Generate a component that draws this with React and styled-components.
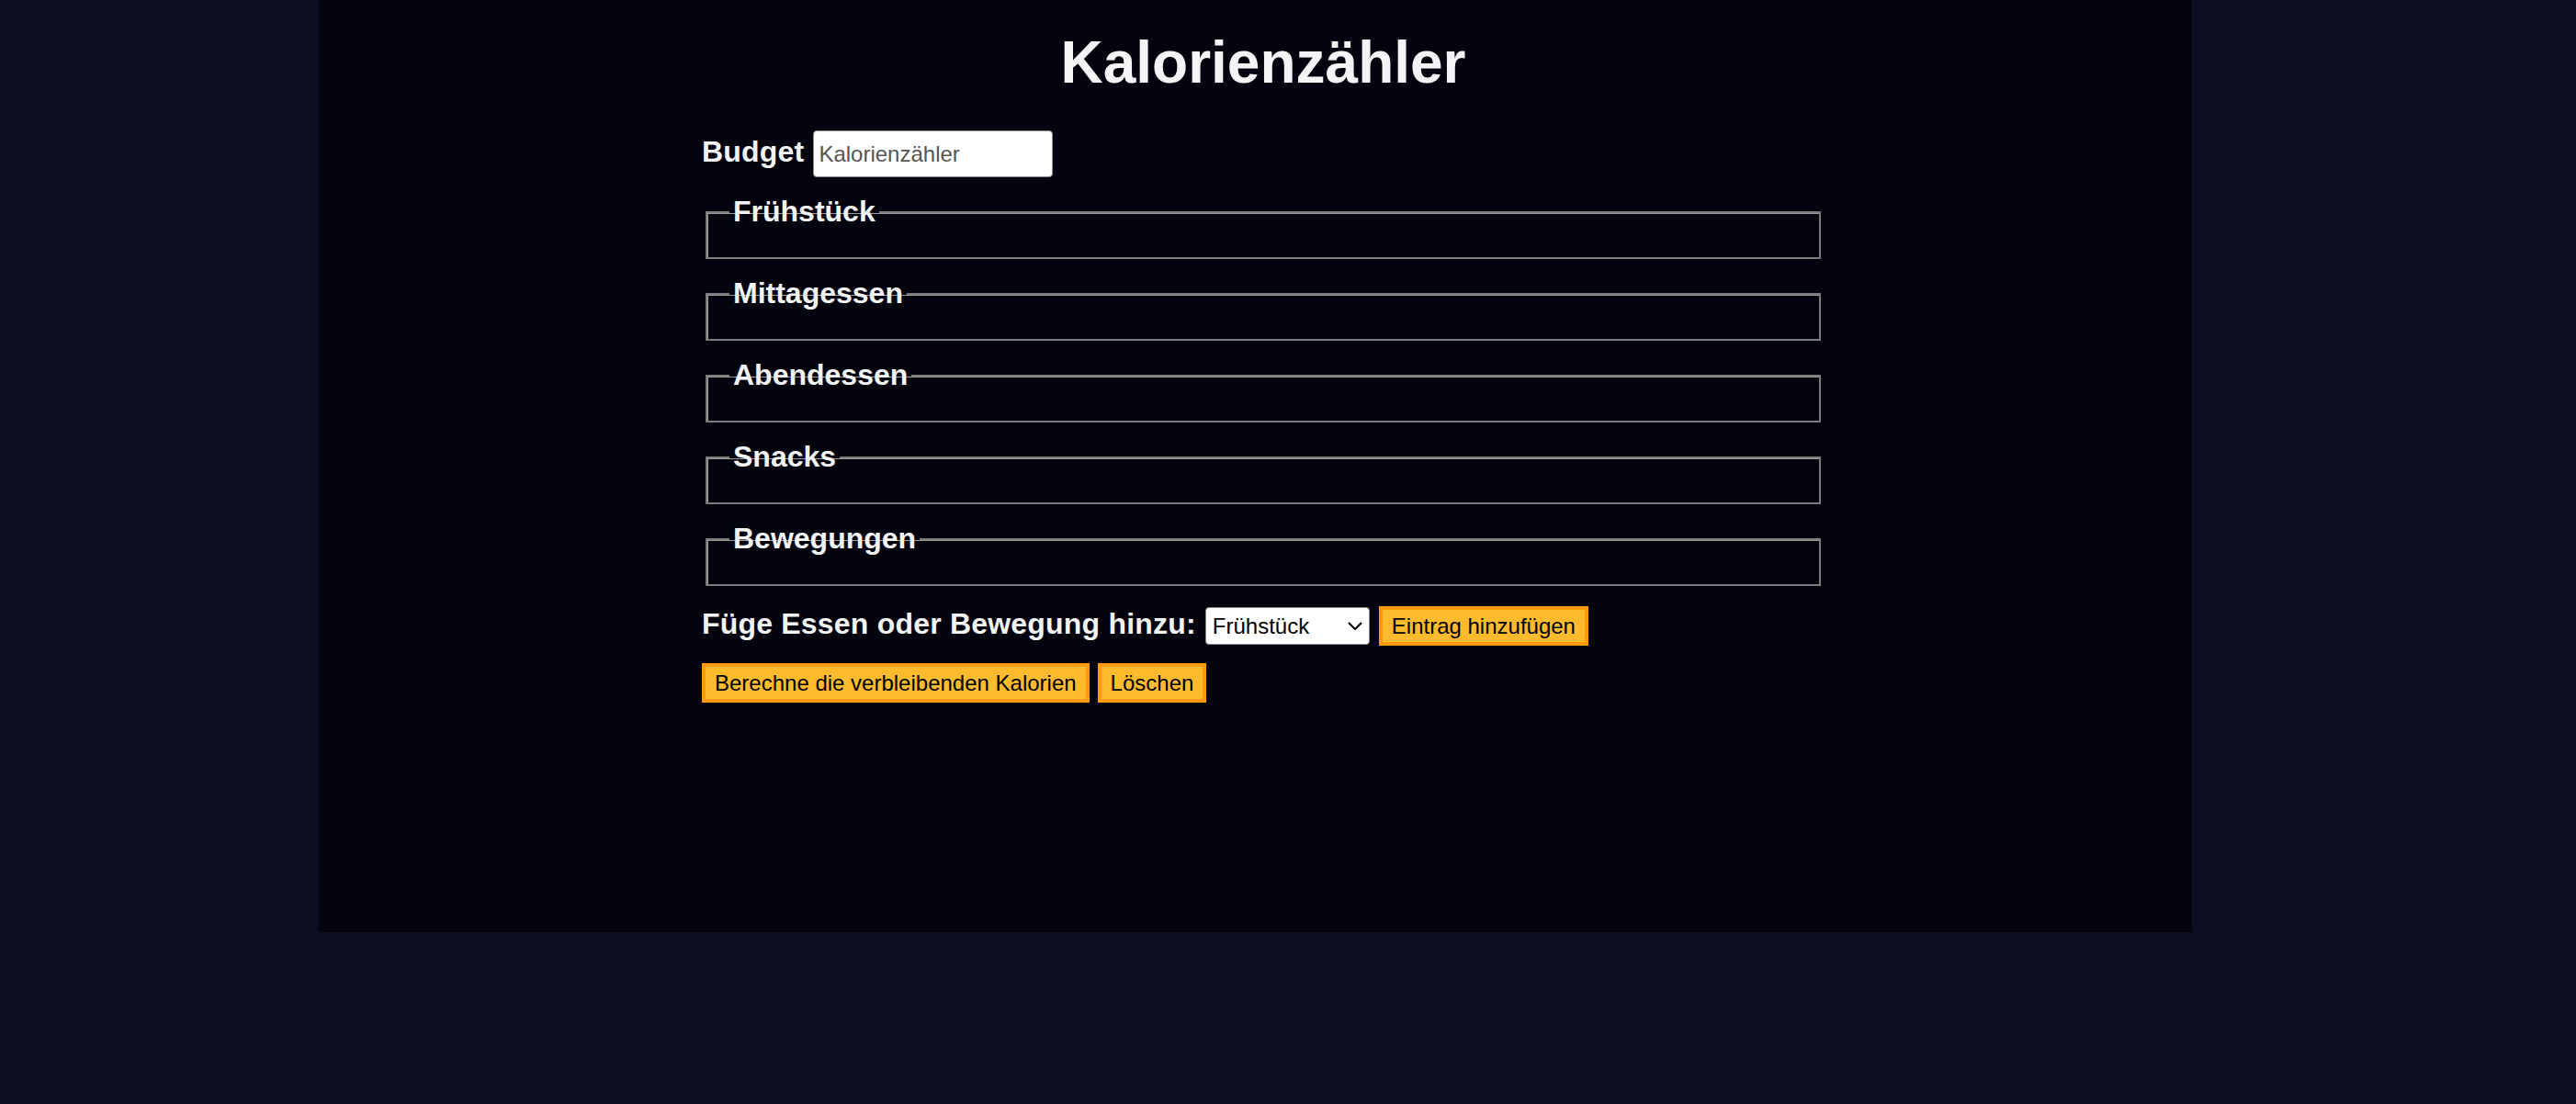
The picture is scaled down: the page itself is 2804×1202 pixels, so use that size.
import React from "react";
import styled, { createGlobalStyle } from "styled-components";

const GlobalStyle = createGlobalStyle`
  body {
    margin: 0;
    background-color: #0c0d21;
    font-family: "Liberation Sans", Arial, sans-serif;
  }
`;

const Page = styled.main`
  margin-left: 347px;
  width: 2039px;
  height: 1015px;
  background-color: #04040f;
  overflow: hidden;
`;

const Inner = styled.div`
  width: 1222px;
  margin-left: 417px;
`;

const Title = styled.h1`
  margin: 31px 0 0;
  font-size: 64px;
  line-height: 74px;
  font-weight: 700;
  color: #f3f4f6;
  text-align: center;
`;

const Row = styled.div`
  display: flex;
  align-items: baseline;
  gap: ${(p) => p.gap || 10}px;
  margin-top: ${(p) => p.top || 0}px;
`;

const Label = styled.label`
  font-size: 32px;
  line-height: 37px;
  font-weight: 700;
  color: #f3f4f6;
  letter-spacing: 0.2px;
`;

const BudgetInput = styled.input`
  box-sizing: border-box;
  width: 261px;
  height: 51px;
  padding: 0 5px;
  border: 1px solid #8a8a8a;
  border-radius: 4px;
  background: #fff;
  font-family: "Liberation Sans", Arial, sans-serif;
  font-size: 24px;
  color: #333;
  outline: none;
  &::placeholder {
    color: #555;
  }
`;

const Meals = styled.div`
  margin-top: 19px;
`;

const Section = styled.fieldset`
  margin: 0 4px 19px;
  padding: 11px 24px 20px;
  border: 2px solid #7c7c7c;
  box-shadow: inset 1px 1px 0 #9a9a9a;
  min-width: 0;
`;

const Legend = styled.legend`
  padding: 0 4px;
  font-size: 32px;
  line-height: 37px;
  font-weight: 700;
  color: #f3f4f6;
`;

const Select = styled.select`
  box-sizing: border-box;
  width: 179px;
  height: 41px;
  padding: 0 30px 0 7px;
  border: 1px solid #8a8a8a;
  border-radius: 4px;
  background: #fff
    url("data:image/svg+xml;utf8,<svg xmlns='http://www.w3.org/2000/svg' width='16' height='9' viewBox='0 0 16 9'><path d='M1 1l7 7 7-7' fill='none' stroke='black' stroke-width='2'/></svg>")
    no-repeat right 7px center;
  appearance: none;
  font-family: "Liberation Sans", Arial, sans-serif;
  font-size: 24px;
  color: #000;
`;

const Button = styled.button`
  padding: 4px 10px;
  border: 4px solid #ff9a0a;
  background-color: #fdbb2d;
  font-family: "Liberation Sans", Arial, sans-serif;
  font-size: 24px;
  line-height: 27px;
  color: #000;
  cursor: pointer;
`;

const sections = ["Frühstück", "Mittagessen", "Abendessen", "Snacks", "Bewegungen"];

export default function App() {
  return (
    <>
      <GlobalStyle />
      <Page>
        <Inner>
          <Title>Kalorienzähler</Title>
          <Row top={37}>
            <Label htmlFor="budget">Budget</Label>
            <BudgetInput id="budget" placeholder="Kalorienzähler" />
          </Row>
          <Meals>
            {sections.map((name) => (
              <Section key={name}>
                <Legend>{name}</Legend>
              </Section>
            ))}
          </Meals>
          <Row top={22}>
            <Label htmlFor="entry">Füge Essen oder Bewegung hinzu:</Label>
            <Select id="entry" defaultValue="Frühstück">
              {sections.map((name) => (
                <option key={name}>{name}</option>
              ))}
            </Select>
            <Button>Eintrag hinzufügen</Button>
          </Row>
          <Row top={19} gap={9}>
            <Button>Berechne die verbleibenden Kalorien</Button>
            <Button>Löschen</Button>
          </Row>
        </Inner>
      </Page>
    </>
  );
}
